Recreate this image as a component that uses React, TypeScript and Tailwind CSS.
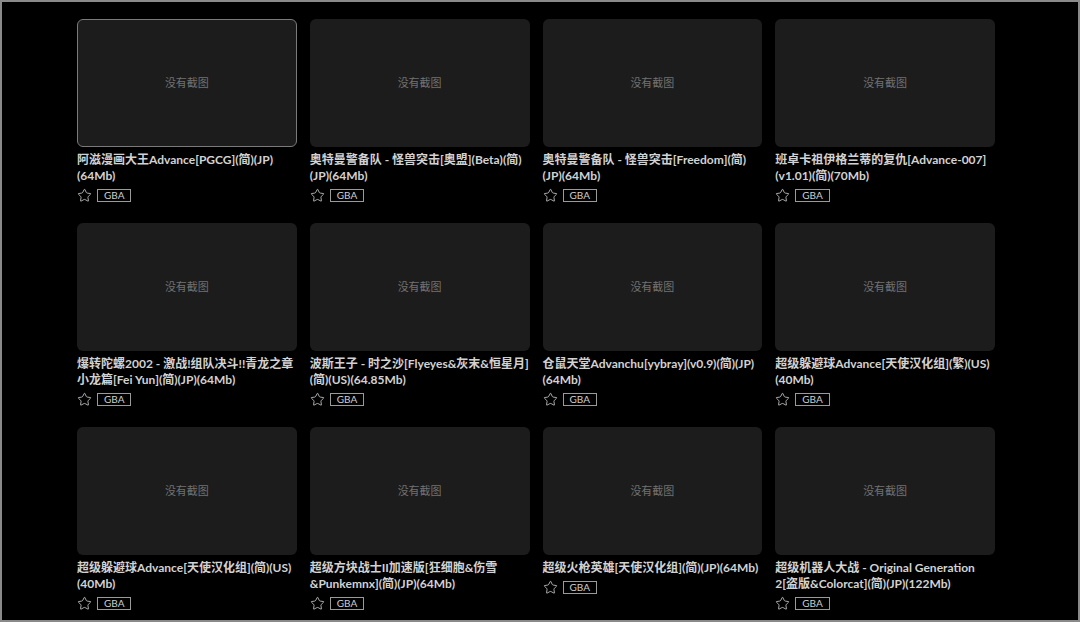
import { Star } from "lucide-react";

interface Game {
  id: number;
  title: string;
  platform: string;
}

const games: Game[] = [
  { id: 1, title: "阿滋漫画大王Advance[PGCG](简)(JP) (64Mb)", platform: "GBA" },
  { id: 2, title: "奥特曼警备队 - 怪兽突击[奥盟](Beta)(简)(JP)(64Mb)", platform: "GBA" },
  { id: 3, title: "奥特曼警备队 - 怪兽突击[Freedom](简)(JP)(64Mb)", platform: "GBA" },
  { id: 4, title: "班卓卡祖伊格兰蒂的复仇[Advance-007](v1.01)(简)(70Mb)", platform: "GBA" },
  { id: 5, title: "爆转陀螺2002 - 激战!组队决斗!!青龙之章小龙篇[Fei Yun](简)(JP)(64Mb)", platform: "GBA" },
  { id: 6, title: "波斯王子 - 时之沙[Flyeyes&灰末&恒星月](简)(US)(64.85Mb)", platform: "GBA" },
  { id: 7, title: "仓鼠天堂Advanchu[yybray](v0.9)(简)(JP)(64Mb)", platform: "GBA" },
  { id: 8, title: "超级躲避球Advance[天使汉化组](繁)(US)(40Mb)", platform: "GBA" },
  { id: 9, title: "超级躲避球Advance[天使汉化组](简)(US)(40Mb)", platform: "GBA" },
  { id: 10, title: "超级方块战士II加速版[狂细胞&伤雪&Punkemnx](简)(JP)(64Mb)", platform: "GBA" },
  { id: 11, title: "超级火枪英雄[天使汉化组](简)(JP)(64Mb)", platform: "GBA" },
  { id: 12, title: "超级机器人大战 - Original Generation 2[盗版&Colorcat](简)(JP)(122Mb)", platform: "GBA" },
];

function GameCard({ game, active }: { game: Game; active?: boolean }) {
  return (
    <div className="flex flex-col cursor-pointer">
      {/* cover placeholder */}
      <div
        className={`h-[128px] rounded-md bg-[#1c1c1c] flex items-center justify-center border ${
          active ? "border-[#7a7a7a]" : "border-transparent"
        }`}
      >
        <span className="text-[11px] text-[#727272]">没有截图</span>
      </div>
      <div className="mt-[5px] text-[12px] leading-[16px] font-bold text-[#d2d2d2] break-words">
        {game.title}
      </div>
      <div className="mt-[4px] flex items-center gap-[5px]">
        <Star size={15} strokeWidth={1.3} className="text-[#d0d0d0]" />
        <span className="border border-[#9a9a9a] px-[6px] text-[10px] leading-[11px] text-[#cfcfcf]">
          {game.platform}
        </span>
      </div>
    </div>
  );
}

export default function App() {
  return (
    <div
      className="w-[1080px] h-[622px] bg-black border-2 border-[#8a8a8a] overflow-hidden"
      style={{ fontFamily: 'Lato, "Noto Sans CJK SC", sans-serif' }}
    >
      <div className="pl-[75px] pt-[17px] w-[993px] grid grid-cols-4 gap-x-[13px] gap-y-[20px]">
        {games.map((g, i) => (
          <GameCard key={g.id} game={g} active={i === 0} />
        ))}
      </div>
    </div>
  );
}
